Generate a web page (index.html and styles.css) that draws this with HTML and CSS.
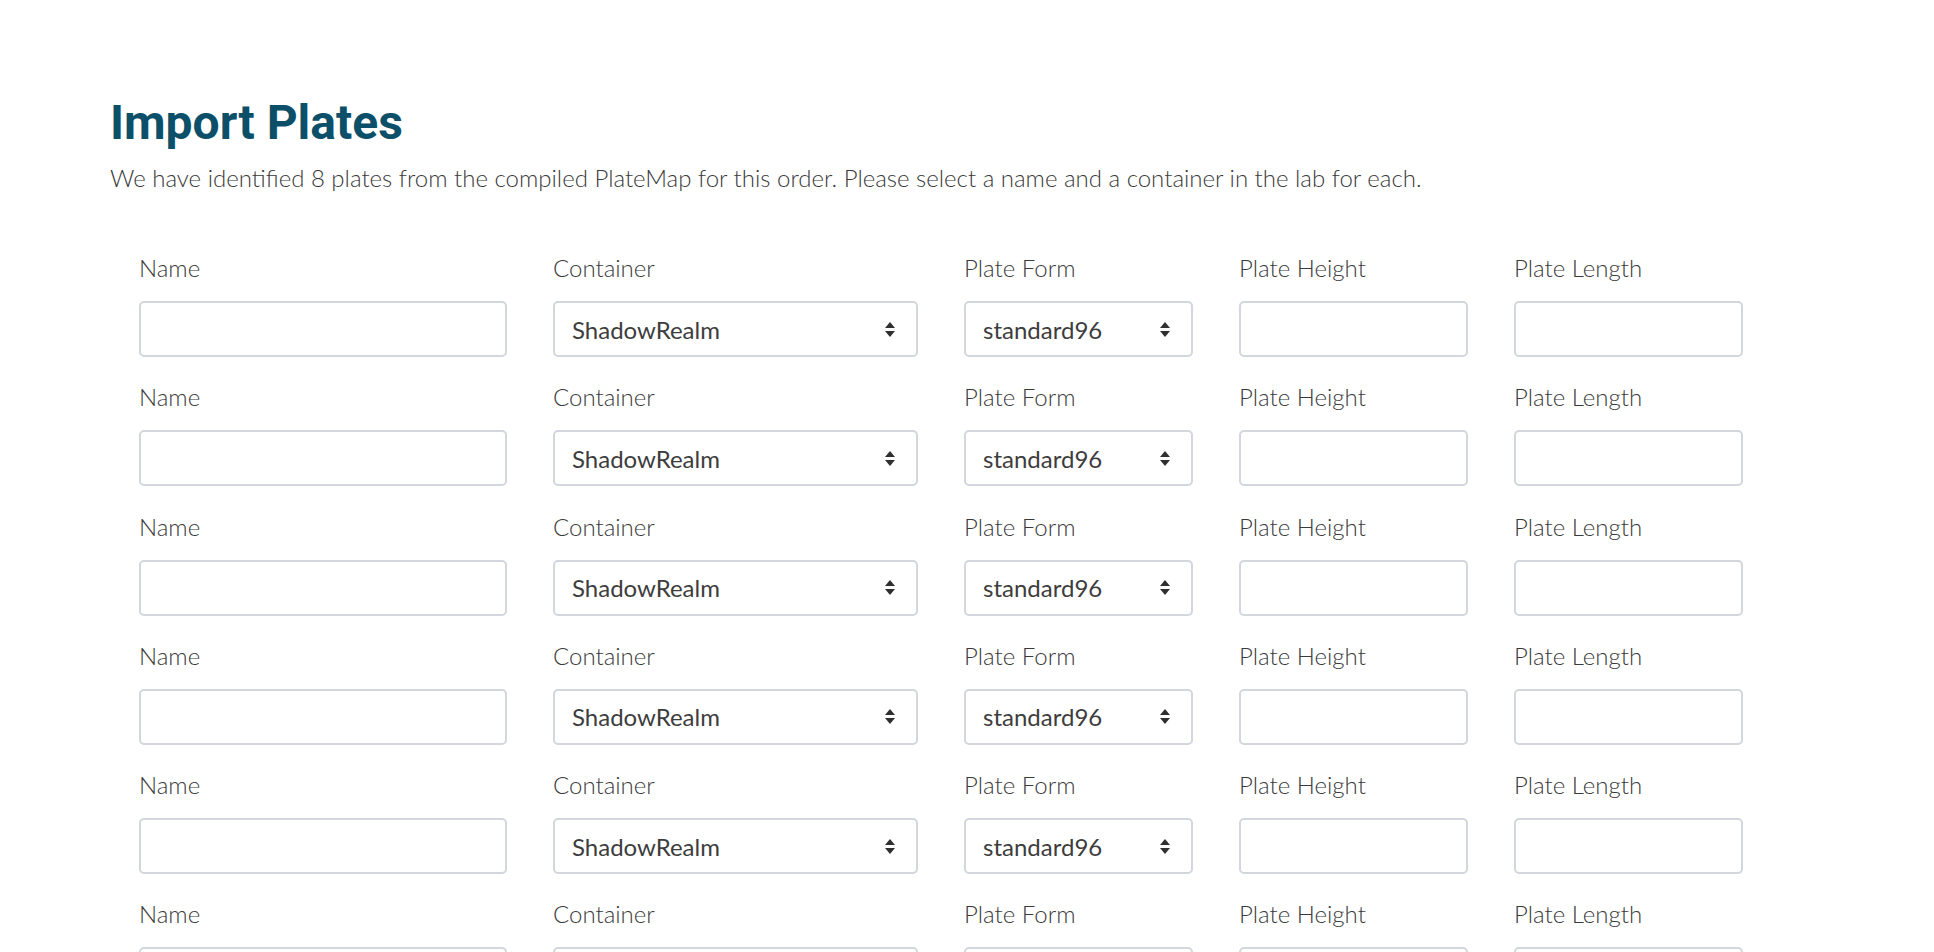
FILE: index.html
```html
<!DOCTYPE html>
<html>
<head>
<meta charset="utf-8">
<link rel="stylesheet" href="styles.css">
</head>
<body>
<main class="page">
  <h1 class="title">Import Plates</h1>
  <p class="subtitle">We have identified 8 plates from the compiled PlateMap for this order. Please select a name and a container in the lab for each.</p>
  <div class="plates">
    <div class="plate-row">
      <div class="field"><label class="label">Name</label><div class="input"></div></div>
      <div class="field"><label class="label">Container</label><div class="input select"><span>ShadowRealm</span><i class="arrows"></i></div></div>
      <div class="field"><label class="label">Plate Form</label><div class="input select"><span>standard96</span><i class="arrows"></i></div></div>
      <div class="field"><label class="label">Plate Height</label><div class="input"></div></div>
      <div class="field"><label class="label">Plate Length</label><div class="input"></div></div>
    </div>
    <div class="plate-row">
      <div class="field"><label class="label">Name</label><div class="input"></div></div>
      <div class="field"><label class="label">Container</label><div class="input select"><span>ShadowRealm</span><i class="arrows"></i></div></div>
      <div class="field"><label class="label">Plate Form</label><div class="input select"><span>standard96</span><i class="arrows"></i></div></div>
      <div class="field"><label class="label">Plate Height</label><div class="input"></div></div>
      <div class="field"><label class="label">Plate Length</label><div class="input"></div></div>
    </div>
    <div class="plate-row">
      <div class="field"><label class="label">Name</label><div class="input"></div></div>
      <div class="field"><label class="label">Container</label><div class="input select"><span>ShadowRealm</span><i class="arrows"></i></div></div>
      <div class="field"><label class="label">Plate Form</label><div class="input select"><span>standard96</span><i class="arrows"></i></div></div>
      <div class="field"><label class="label">Plate Height</label><div class="input"></div></div>
      <div class="field"><label class="label">Plate Length</label><div class="input"></div></div>
    </div>
    <div class="plate-row">
      <div class="field"><label class="label">Name</label><div class="input"></div></div>
      <div class="field"><label class="label">Container</label><div class="input select"><span>ShadowRealm</span><i class="arrows"></i></div></div>
      <div class="field"><label class="label">Plate Form</label><div class="input select"><span>standard96</span><i class="arrows"></i></div></div>
      <div class="field"><label class="label">Plate Height</label><div class="input"></div></div>
      <div class="field"><label class="label">Plate Length</label><div class="input"></div></div>
    </div>
    <div class="plate-row">
      <div class="field"><label class="label">Name</label><div class="input"></div></div>
      <div class="field"><label class="label">Container</label><div class="input select"><span>ShadowRealm</span><i class="arrows"></i></div></div>
      <div class="field"><label class="label">Plate Form</label><div class="input select"><span>standard96</span><i class="arrows"></i></div></div>
      <div class="field"><label class="label">Plate Height</label><div class="input"></div></div>
      <div class="field"><label class="label">Plate Length</label><div class="input"></div></div>
    </div>
    <div class="plate-row">
      <div class="field"><label class="label">Name</label><div class="input"></div></div>
      <div class="field"><label class="label">Container</label><div class="input select"><span>ShadowRealm</span><i class="arrows"></i></div></div>
      <div class="field"><label class="label">Plate Form</label><div class="input select"><span>standard96</span><i class="arrows"></i></div></div>
      <div class="field"><label class="label">Plate Height</label><div class="input"></div></div>
      <div class="field"><label class="label">Plate Length</label><div class="input"></div></div>
    </div>
    <div class="plate-row">
      <div class="field"><label class="label">Name</label><div class="input"></div></div>
      <div class="field"><label class="label">Container</label><div class="input select"><span>ShadowRealm</span><i class="arrows"></i></div></div>
      <div class="field"><label class="label">Plate Form</label><div class="input select"><span>standard96</span><i class="arrows"></i></div></div>
      <div class="field"><label class="label">Plate Height</label><div class="input"></div></div>
      <div class="field"><label class="label">Plate Length</label><div class="input"></div></div>
    </div>
    <div class="plate-row">
      <div class="field"><label class="label">Name</label><div class="input"></div></div>
      <div class="field"><label class="label">Container</label><div class="input select"><span>ShadowRealm</span><i class="arrows"></i></div></div>
      <div class="field"><label class="label">Plate Form</label><div class="input select"><span>standard96</span><i class="arrows"></i></div></div>
      <div class="field"><label class="label">Plate Height</label><div class="input"></div></div>
      <div class="field"><label class="label">Plate Length</label><div class="input"></div></div>
    </div>
  </div>
</main>
</body>
</html>
```

FILE: styles.css
```css
html, body {
  margin: 0;
  padding: 0;
  background: #ffffff;
}

.page {
  padding: 94px 0 40px 110px;
  font-family: "Lato", "Liberation Sans", sans-serif;
  color: #404040;
}

.title {
  margin: 0;
  font-family: "Roboto", "Liberation Sans", sans-serif;
  font-weight: 700;
  font-size: 48px;
  line-height: 58px;
  color: #0c4f69;
}

.subtitle {
  margin: 11px 0 0 0;
  font-weight: 300;
  font-size: 24px;
  line-height: 30px;
  color: #3a3a3a;
}

.plates {
  margin-top: 61px;
  padding-left: 29px;
  display: flex;
  flex-direction: column;
  gap: 26.3px;
}

.plate-row {
  display: grid;
  grid-template-columns: 368px 365px 229px 229px 229px;
  column-gap: 46px;
}

.field {
  display: flex;
  flex-direction: column;
  gap: 19px;
}

.label {
  font-weight: 300;
  font-size: 24px;
  line-height: 28px;
  color: #3a3a3a;
}

.input {
  box-sizing: border-box;
  height: 56px;
  border: 2px solid #d3d6dc;
  border-radius: 5px;
  background: #fff;
  display: flex;
  align-items: center;
  padding: 0 16px 0 17px;
  font-size: 24px;
  color: #3d3d3d;
}

.select span {
  flex: 1;
}

.arrows {
  width: 10px;
  height: 15px;
  margin-right: 5px;
  position: relative;
}

.arrows::before,
.arrows::after {
  content: "";
  position: absolute;
  left: 0;
  border-left: 5px solid transparent;
  border-right: 5px solid transparent;
}

.arrows::before {
  top: 0;
  border-bottom: 6px solid #2f2f2f;
}

.arrows::after {
  bottom: 0;
  border-top: 6px solid #2f2f2f;
}
```
